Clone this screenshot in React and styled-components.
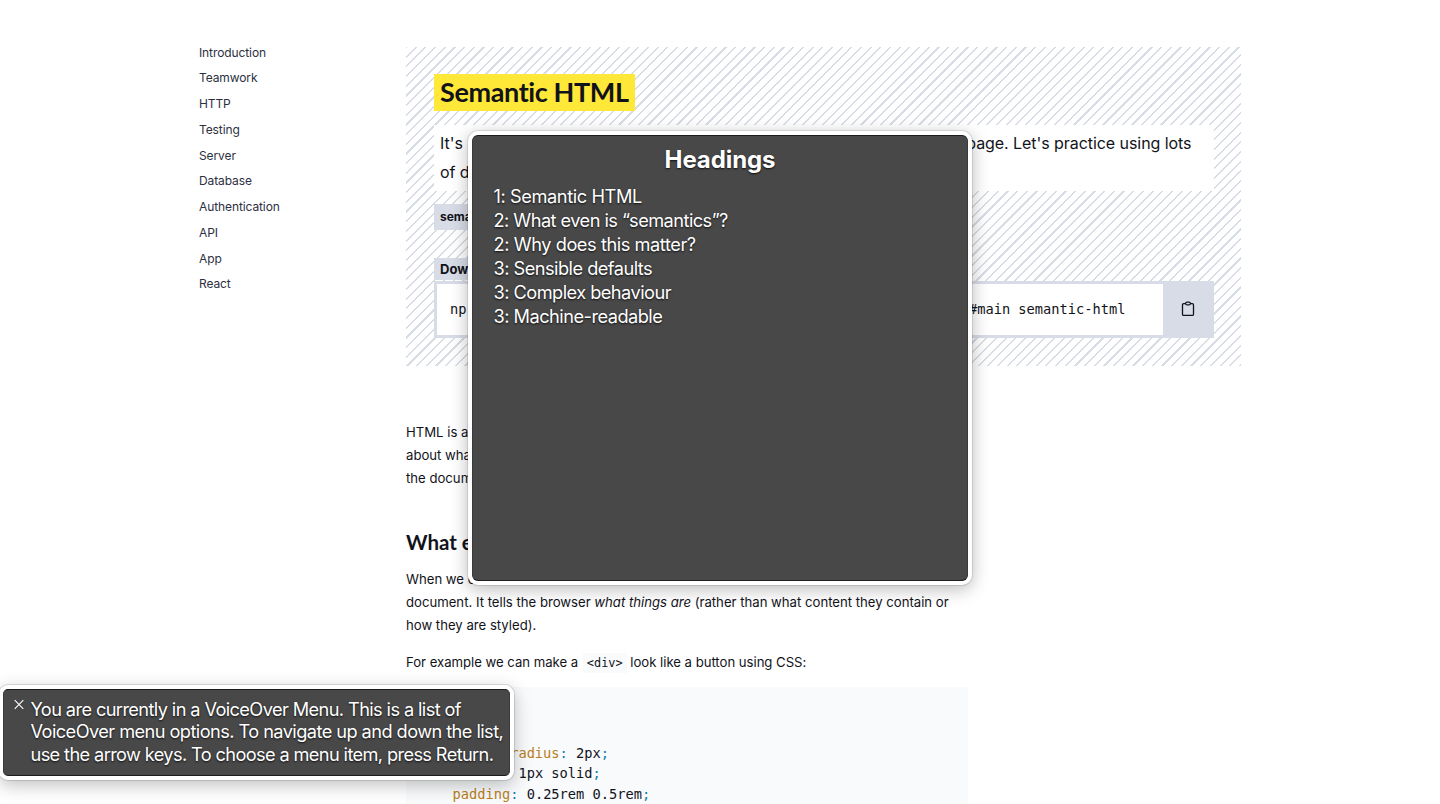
import React from 'react';
import styled, { createGlobalStyle, css } from 'styled-components';

const sans = '"Inter", "Liberation Sans", sans-serif';
const mono = '"DejaVu Sans Mono", "Liberation Mono", monospace';

const GlobalStyle = createGlobalStyle`
  * { box-sizing: border-box; }
  html, body { margin: 0; height: 804px; overflow: hidden; background: #fff; }
  body { font-family: ${sans}; color: #12131a; }
  h1, h2, p, ul, ol, pre { margin: 0; padding: 0; font-weight: inherit; }
  li { list-style: none; }
`;

const Page = styled.div`
  position: relative;
  width: 1440px;
  height: 804px;
  overflow: hidden;
  display: flex;
  padding: 47px 0 0 199px;
`;

const Nav = styled.nav`
  width: 207px;
  flex: none;
  margin-top: -7.3px;
`;

const NavItem = styled.li`
  height: 25.75px;
  line-height: 25.75px;
  font-size: 12px;
  letter-spacing: -0.1px;
  color: #2d2f42;
`;

const Main = styled.main`
  width: 835px;
  flex: none;
`;

const Hero = styled.header`
  height: 319px;
  padding: 27px 27.5px 0 28px;
  display: flex;
  flex-direction: column;
  align-items: flex-start;
  background: repeating-linear-gradient(
    -45deg,
    #fff 0, #fff 0.3px, #d8dce4 0.3px, #d8dce4 1.85px, #fff 1.85px, #fff 6.845px
  );
`;

const Title = styled.h1`
  height: 37px;
  width: 201px;
  padding: 0 6px;
  background: #ffe838;
  font: 700 27px/35px "Lato", ${sans};
  letter-spacing: -0.38px;
  white-space: nowrap;
`;

const Lead = styled.p`
  align-self: stretch;
  height: 66px;
  margin-top: 14px;
  padding: 4px 22px 4px 6px;
  background: #fff;
  font-size: 16px;
  letter-spacing: -0.06px;
  line-height: 29px;
  display: flex;
  flex-direction: column;
`;

const LeadLine = styled.span`
  display: flex;
  justify-content: space-between;
  white-space: nowrap;
`;

const Label = styled.div`
  height: ${p => p.$h}px;
  line-height: ${p => p.$h}px;
  margin-top: ${p => p.$top}px;
  padding: 0 6px;
  background: #d8dce6;
  font-size: ${p => p.$size}px;
  font-weight: 700;
  white-space: nowrap;
`;

const Command = styled.div`
  align-self: stretch;
  height: 57px;
  margin-top: 1px;
  padding: 3px 0 3px 3px;
  background: #d8dce6;
  display: flex;
`;

const CommandText = styled.code`
  flex: 1;
  padding: 0 37px 0 13px;
  background: #fff;
  font: 13.7px/51px ${mono};
  display: flex;
  justify-content: space-between;
  white-space: pre;
`;

const CopyButton = styled.button`
  width: 51px;
  border: 0;
  padding: 0 0 1px;
  background: transparent;
  display: grid;
  place-items: center;
`;

const Article = styled.article`
  width: 562px;
  padding-top: 55px;
`;

const Paragraph = styled.p`
  margin-top: ${p => p.$top || 0}px;
  font-size: 13.15px;
  line-height: 23px;
  letter-spacing: ${p => p.$tracking || 0}px;
  white-space: nowrap;
`;

const Subtitle = styled.h2`
  margin-top: 39px;
  height: 26px;
  font: 700 20.5px/26px "Lato", ${sans};
  white-space: nowrap;
`;

const InlineCode = styled.code`
  padding: 3px 4px;
  margin: 0 0 0 1px;
  background: #f8fafc;
  font: 11.9px ${mono};
  letter-spacing: 0;
`;

const CodeBlock = styled.pre`
  margin-top: 13px;
  height: 140px;
  padding: 14.5px 13.5px;
  background: #f8fafc;
  font: 13.7px/20.6px ${mono};
`;

const Prop = styled.span`color: #b8801c;`;
const Punct = styled.span`color: #0f80a8;`;

const panel = css`
  position: absolute;
  background: #484848;
  color: #fff;
  border: 1px solid #1c1c1c;
  border-left-color: #3a3a3a;
  border-right-color: #3a3a3a;
  text-shadow: 0 1px 2px rgba(0, 0, 0, 0.8);
`;

const Rotor = styled.section`
  ${panel}
  left: 472px;
  top: 135px;
  width: 496px;
  height: 446px;
  border-radius: 6px;
  padding: 8px 20.5px;
  box-shadow: 0 0 0 4px #fff, 0 0 0 5px rgba(0, 0, 0, 0.1), 0 4px 18px 4px rgba(0, 0, 0, 0.28);
`;

const RotorTitle = styled.h2`
  height: 32px;
  font-size: 24px;
  line-height: 32px;
  font-weight: 700;
  letter-spacing: -0.1px;
  text-align: center;
`;

const RotorItem = styled.li`
  height: 24px;
  font-size: 18.2px;
  line-height: 24px;
  letter-spacing: ${p => p.$tracking}px;
  white-space: nowrap;
`;

const RotorList = styled.ol`margin-top: 8px;`;

const Caption = styled.aside`
  ${panel}
  left: 3px;
  top: 689px;
  width: 507px;
  height: 87px;
  border-radius: 5px;
  padding: 8px 0 0 10px;
  display: flex;
  gap: 6.5px;
  font-size: 18.2px;
  line-height: 22.3px;
  box-shadow: 0 0 0 4px #fff, 0 0 0 5px rgba(0, 0, 0, 0.12), 0 5px 18px 4px rgba(0, 0, 0, 0.26);
`;

const CloseIcon = styled.svg`
  flex: none;
  margin-top: 1px;
`;

const CaptionLine = styled.p`
  white-space: nowrap;
  letter-spacing: ${p => p.$tracking}px;
`;

const links = ['Introduction', 'Teamwork', 'HTTP', 'Testing', 'Server', 'Database', 'Authentication', 'API', 'App', 'React'];
const headings = [
  ['1: Semantic HTML', -0.4],
  ['2: What even is “semantics”?', -0.54],
  ['2: Why does this matter?', -0.43],
  ['3: Sensible defaults', -0.52],
  ['3: Complex behaviour', -0.53],
  ['3: Machine-readable', -0.51],
];
const captionLines = [
  ['You are currently in a VoiceOver Menu. This is a list of', -0.6],
  ['VoiceOver menu options. To navigate up and down the list,', -0.56],
  ['use the arrow keys. To choose a menu item, press Return.', -0.62],
];

export default function App() {
  return (
    <>
      <GlobalStyle />
      <Page>
        <Nav>
          <ul>{links.map(l => <NavItem key={l}>{l}</NavItem>)}</ul>
        </Nav>
        <Main>
          <Hero>
            <Title>Semantic HTML</Title>
            <Lead>
              <LeadLine><span>It's</span><span>page. Let's practice using lots</span></LeadLine>
              <LeadLine>of d</LeadLine>
            </Lead>
            <Label $h={26} $top={13} $size={12}>sema</Label>
            <Label $h={22} $top={28} $size={13}>Dow</Label>
            <Command>
              <CommandText><span>np</span><span>#main semantic-html</span></CommandText>
              <CopyButton aria-label="Copy">
                <svg width="14" height="16" viewBox="0 0 14 16" fill="none" stroke="#12131a" strokeWidth="1.3" strokeLinejoin="round">
                  <path d="M4.500 2.700H2.700a1.200 1.200 0 0 0-1.200 1.200v9.300a1.200 1.200 0 0 0 1.200 1.200h8.600a1.200 1.200 0 0 0 1.200-1.200V3.900a1.200 1.200 0 0 0-1.200-1.200H9.500" />
                  <path d="M4.500 2.500q.2-1.400 1.500-1.400h2q1.300 0 1.500 1.400-.2 1.400-1.500 1.400H6q-1.300 0-1.500-1.400z" />
                </svg>
              </CopyButton>
            </Command>
          </Hero>
          <Article>
            <Paragraph>HTML is a<br />about wha<br />the docum</Paragraph>
            <Subtitle>What e</Subtitle>
            <Paragraph $top={13}>
              When we c<br />
              document. It tells the browser <em>what things are</em> (rather than what content they contain or<br />
              how they are styled).
            </Paragraph>
            <Paragraph $top={14} $tracking={-0.02}>
              For example we can make a <InlineCode>&lt;div&gt;</InlineCode> look like a button using CSS:
            </Paragraph>
            <CodeBlock>
              {'\n\n    '}<Prop>border-radius</Prop><Punct>:</Punct>{' 2px'}<Punct>;</Punct>
              {'\n    '}<Prop>border</Prop><Punct>:</Punct>{' 1px solid'}<Punct>;</Punct>
              {'\n    '}<Prop>padding</Prop><Punct>:</Punct>{' 0.25rem 0.5rem'}<Punct>;</Punct>
            </CodeBlock>
          </Article>
        </Main>
        <Rotor>
          <RotorTitle>Headings</RotorTitle>
          <RotorList>
            {headings.map(([text, tracking]) => <RotorItem key={text} $tracking={tracking}>{text}</RotorItem>)}
          </RotorList>
        </Rotor>
        <Caption>
          <CloseIcon width="10" height="11" viewBox="0 0 10 11" stroke="#fff" strokeWidth="1.1">
            <path d="M.7 1.200l8.600 8.600M9.300 1.200l-8.600 8.600" />
          </CloseIcon>
          <div>
            {captionLines.map(([text, tracking]) => <CaptionLine key={text} $tracking={tracking}>{text}</CaptionLine>)}
          </div>
        </Caption>
      </Page>
    </>
  );
}
